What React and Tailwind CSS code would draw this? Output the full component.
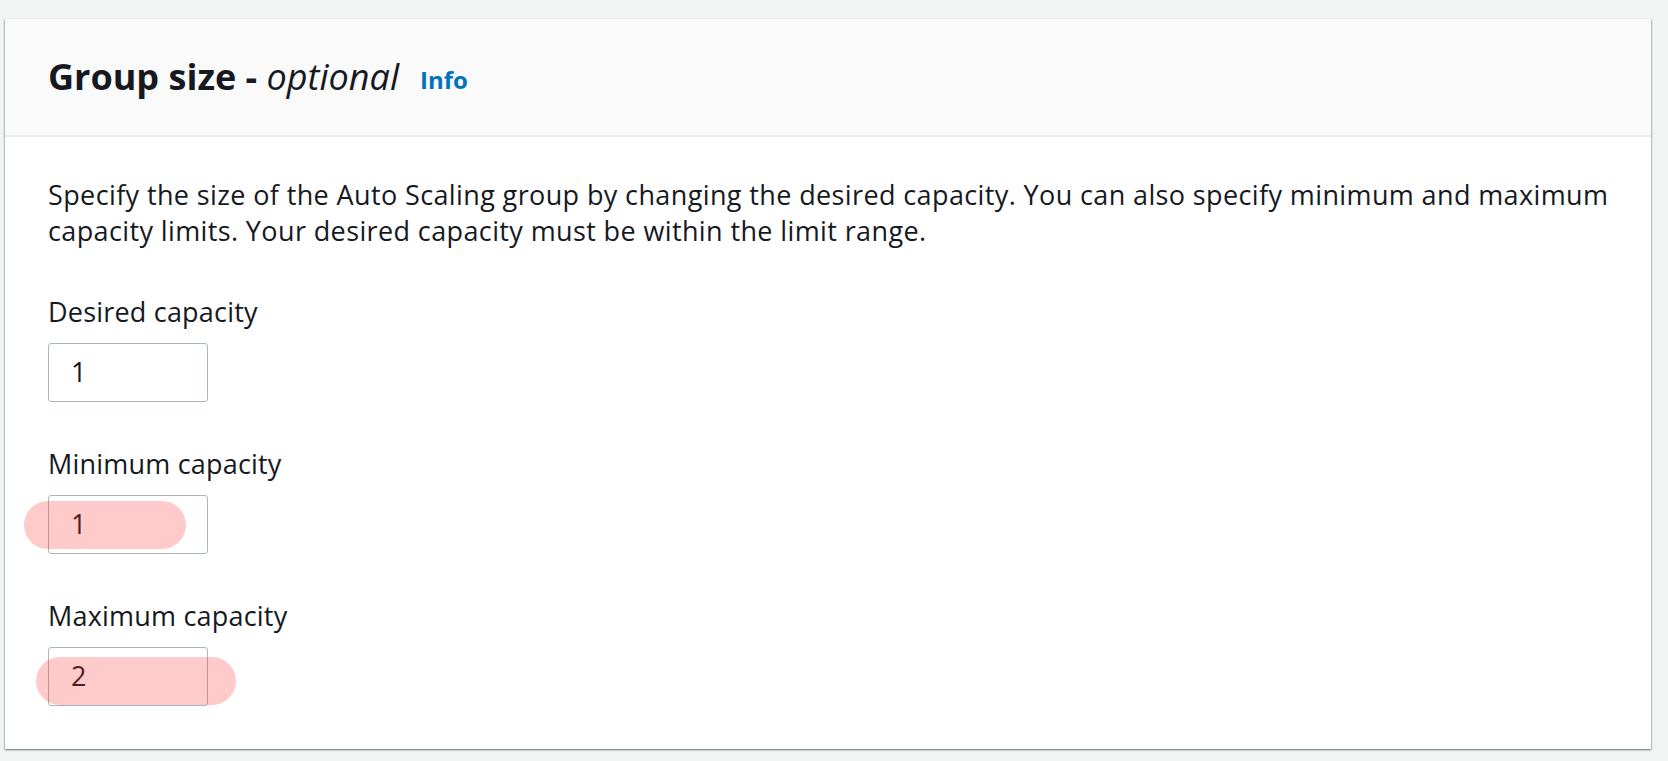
import React from 'react';

const fields = [
    { label: 'Desired capacity', value: '1' },
    { label: 'Minimum capacity', value: '1', mark: 'left-[-24px] w-[162px] top-[6px] h-[48px]' },
    { label: 'Maximum capacity', value: '2', mark: 'left-[-12px] w-[200px] top-[10px] h-[48px]' },
];

const App = () => {
    return (
        <div className="min-h-[761px] bg-[#f2f3f3] pt-[19px] pl-[5px] pr-[17px] pb-[13px]" style={{ fontFamily: '"Open Sans", "Noto Sans", sans-serif' }}>
            <div className="bg-white shadow-[0_1px_2px_0_rgba(0,28,36,0.35),1px_1px_1px_0_rgba(0,28,36,0.15),-1px_1px_1px_0_rgba(0,28,36,0.15)]">
                {/* Header */}
                <div className="h-[118px] flex items-center px-[43px] bg-[#fafafa] border-b-2 border-[#eaeded]">
                    <h2 className="text-[36px] font-bold text-[#16191f]">
                        Group size - <span className="italic font-medium">optional</span>
                    </h2>
                    <span className="ml-[21px] mt-[6px] text-[24px] font-bold text-[#0073bb]">Info</span>
                </div>

                {/* Body */}
                <div className="px-[43px] pt-[40px] pb-[43px] text-[#16191f]">
                    <p className="w-[1585px] text-[27px] leading-[36px] tracking-[0.38px]">
                        Specify the size of the Auto Scaling group by changing the desired capacity. You can also specify minimum and maximum capacity limits. Your desired capacity must be within the limit range.
                    </p>

                    <div className="mt-[45px] flex flex-col gap-[44px]">
                        {fields.map((f) => (
                            <div key={f.label}>
                                <label className="block text-[27px] tracking-[0.2px] leading-[36px]">{f.label}</label>
                                <div className="relative mt-[13px] w-[160px] h-[59px]">
                                    <div className="w-full h-full border border-[#aab7b8] rounded-[3px] bg-white flex items-center pl-[22px] text-[27px] text-[#16191f]">
                                        {f.value}
                                    </div>
                                    {f.mark && (
                                        <div className={`absolute ${f.mark} rounded-full bg-[#ff2b2b]/25`} />
                                    )}
                                </div>
                            </div>
                        ))}
                    </div>
                </div>
            </div>
        </div>
    );
};

export default App;
